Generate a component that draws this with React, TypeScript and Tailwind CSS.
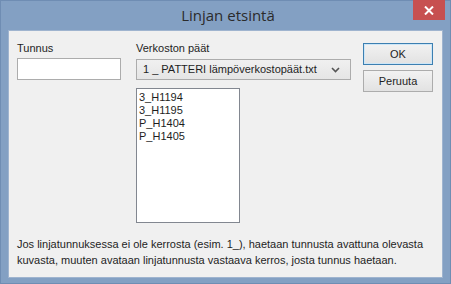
const items = ["3_H1194", "3_H1195", "P_H1404", "P_H1405"];

export default function App() {
  return (
    <div className="w-[451px] h-[284px] bg-[#83a0c3] border border-[#6f8db3] flex flex-col font-['Liberation_Sans',sans-serif] text-[#1e1e1e]">
      <div className="h-[29px] flex shrink-0">
        <div className="w-[42px]" />
        <div className="flex-1 flex justify-center pt-[3px] text-[15px] text-[#2b2b2b] font-['Open_Sans',sans-serif]">
          Linjan etsintä
        </div>
        <div className="w-[32px] h-[20px] -mt-px bg-[#c75050] flex items-center justify-center mr-[5px]">
          <svg width="10" height="9" viewBox="0 0 10 9">
            <path d="M1 0.5 L9 8.5 M9 0.5 L1 8.5" stroke="#fff" strokeWidth="2" />
          </svg>
        </div>
      </div>
      <div className="mx-[7px] mb-[5px] flex-1 bg-[#f0f0f0] border border-[#9fb4cf] flex flex-col px-[8px] text-[11px]">
        <div className="flex mt-[10px]">
          <div className="w-[119px] flex flex-col">
            <div className="h-[14px] leading-[14px]">Tunnus</div>
            <div className="mt-[3px] w-[104px] h-[22px] bg-white border border-[#acacac]" />
          </div>
          <div className="w-[227px] flex flex-col">
            <div className="h-[14px] leading-[14px]">Verkoston päät</div>
            <div className="mt-[4px] w-[215px] h-[21px] border border-[#acacac] bg-gradient-to-b from-[#f0f0f0] to-[#e5e5e5] flex items-center pl-[6px] pr-[10px]">
              <span className="flex-1">1 _ PATTERI lämpöverkostopäät.txt</span>
              <svg width="9" height="6" viewBox="0 0 9 6">
                <path d="M1 1 L4.5 4.5 L8 1" stroke="#555" strokeWidth="1.6" fill="none" />
              </svg>
            </div>
            <div className="mt-[8px] w-[104px] h-[135px] bg-white border border-[#828790] pl-[2px] pt-[2px] flex flex-col">
              {items.map((it) => (
                <div key={it} className="h-[13px] leading-[13px]">
                  {it}
                </div>
              ))}
            </div>
          </div>
          <div className="flex flex-col gap-[5px] mt-[2px]">
            <div className="w-[70px] h-[22px] border border-[#3c7fb1] bg-gradient-to-b from-[#f2f2f2] to-[#e2e2e2] flex items-center justify-center shadow-[inset_0_0_0_1px_#cde6f7]">
              OK
            </div>
            <div className="w-[70px] h-[22px] border border-[#acacac] bg-gradient-to-b from-[#f2f2f2] to-[#e2e2e2] flex items-center justify-center">
              Peruuta
            </div>
          </div>
        </div>
        <div className="mt-[13px] leading-[16px]">
          Jos linjatunnuksessa ei ole kerrosta (esim. 1_), haetaan tunnusta avattuna olevasta
          <br />
          kuvasta, muuten avataan linjatunnusta vastaava kerros, josta tunnus haetaan.
        </div>
      </div>
    </div>
  );
}
